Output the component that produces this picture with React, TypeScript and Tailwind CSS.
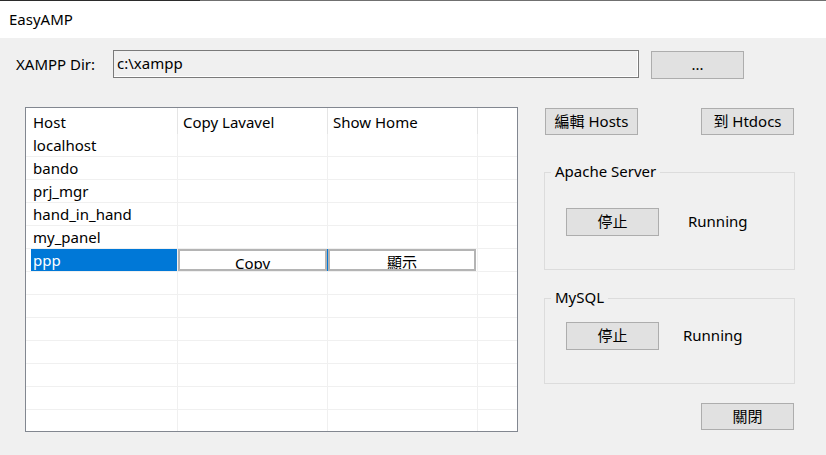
import React from "react";

const font = { fontFamily: '"Noto Sans", "Noto Sans CJK TC", sans-serif' };

function Btn({ children, className = "" }: { children: React.ReactNode; className?: string }) {
  return (
    <div
      className={
        "flex items-center justify-center bg-[#e1e1e1] border border-[#adadad] text-[15px] text-black leading-none pb-[1px] " +
        className
      }
    >
      {children}
    </div>
  );
}

function Group({ label, className = "", children }: { label: string; className?: string; children: React.ReactNode }) {
  return (
    <div className={"relative border border-[#dcdcdc] " + className}>
      <div className="absolute left-[6px] top-[-12px] bg-[#f0f0f0] px-[4px] text-[15px] leading-[20px] text-black">
        {label}
      </div>
      {children}
    </div>
  );
}

const hosts = ["localhost", "bando", "prj_mgr", "hand_in_hand", "my_panel"];

export default function App() {
  const emptyRows = Array.from({ length: 7 });
  return (
    <div className="w-[826px] h-[455px] flex flex-col overflow-hidden bg-[#f0f0f0]" style={font}>
      <div className="flex h-[1px]">
        <div className="w-[200px] bg-[#2b2b2b]" />
        <div className="flex-1 bg-[#707070]" />
      </div>
      <div className="h-[37px] bg-white flex items-center pl-[9px] text-[15px] text-black">EasyAMP</div>
      <div className="flex-1 flex flex-col pl-[16px]">
        <div className="flex mt-[12px] h-[28px]">
          <div className="w-[97px] h-[28px] flex items-center text-[15px] text-black">XAMPP Dir:</div>
          <div className="w-[526px] h-[28px] border border-[#7a7a7a] bg-[#f0f0f0]">
            <div className="h-full border-r border-b border-white flex items-center pl-[3px] pb-[1px] text-[15px] text-black">
              c:\xampp
            </div>
          </div>
          <Btn className="ml-[12px] mt-[1px] w-[93px] h-[28px]">...</Btn>
        </div>
        <div className="flex mt-[29px] pl-[9px]">
          {/* table */}
          <div className="w-[493px] h-[325px] border border-[#828790] bg-white overflow-hidden text-[15px] text-black">
            <div className="flex h-[26px]">
              <div className="w-[5px]" />
              <div className="w-[147px] border-r border-[#e5e5e5] flex items-center pl-[2px] pt-[3px]">Host</div>
              <div className="w-[150px] border-r border-[#e5e5e5] flex items-center pl-[5px] pt-[3px]">Copy Lavavel</div>
              <div className="w-[150px] border-r border-[#e5e5e5] flex items-center pl-[5px] pt-[3px]">Show Home</div>
              <div className="flex-1" />
            </div>
            {hosts.map((h) => (
              <div key={h} className="flex h-[23px] border-b border-[#f0f0f0] pl-[1px]">
                <div className="w-[4px]" />
                <div className="w-[147px] border-r border-[#f0f0f0] flex items-center pl-[2px]">{h}</div>
                <div className="w-[150px] border-r border-[#f0f0f0]" />
                <div className="w-[150px] border-r border-[#f0f0f0]" />
                <div className="flex-1" />
              </div>
            ))}
            <div className="flex h-[23px] border-b border-[#f0f0f0] pl-[1px]">
              <div className="w-[4px]" />
              <div className="w-[146px] bg-[#0078d7] text-white flex items-center pl-[2px]">ppp</div>
              <div className="w-[1px] bg-[#f0f0f0]" />
              <div className="w-[150px] border-r border-[#0078d7] flex items-stretch">
                <div className="flex-1 border-2 border-[#b4b4b4] bg-white flex justify-center overflow-hidden pt-[2px] leading-[20px]">
                  Copy
                </div>
              </div>
              <div className="w-[150px] border-r border-[#f0f0f0] flex items-stretch pr-[1px]">
                <div className="flex-1 border-2 border-[#b4b4b4] bg-white flex justify-center overflow-hidden pt-[1px] leading-[20px]">
                  顯示
                </div>
              </div>
              <div className="flex-1" />
            </div>
            {emptyRows.map((_, i) => (
              <div key={i} className="flex h-[23px] border-b border-[#f0f0f0] pl-[1px]">
                <div className="w-[4px]" />
                <div className="w-[147px] border-r border-[#f0f0f0]" />
                <div className="w-[150px] border-r border-[#f0f0f0]" />
                <div className="w-[150px] border-r border-[#f0f0f0]" />
                <div className="flex-1" />
              </div>
            ))}
          </div>
          {/* right column */}
          <div className="ml-[26px] w-[251px] flex flex-col">
            <div className="flex justify-between px-[1px] mt-[1px]">
              <Btn className="w-[93px] h-[27px]">編輯 Hosts</Btn>
              <Btn className="w-[93px] h-[27px]">到 Htdocs</Btn>
            </div>
            <Group label="Apache Server" className="mt-[37px] h-[98px]">
              <div className="flex items-center pt-[35px] pl-[21px]">
                <Btn className="w-[93px] h-[28px]">停止</Btn>
                <div className="ml-[29px] text-[15px] text-black pb-[2px]">Running</div>
              </div>
            </Group>
            <Group label="MySQL" className="mt-[28px] h-[86px]">
              <div className="flex items-center pt-[23px] pl-[21px]">
                <Btn className="w-[93px] h-[28px]">停止</Btn>
                <div className="ml-[24px] text-[15px] text-black pb-[2px]">Running</div>
              </div>
            </Group>
            <div className="flex justify-end pr-[1px] mt-[19px]">
              <Btn className="w-[93px] h-[27px]">關閉</Btn>
            </div>
          </div>
        </div>
      </div>
    </div>
  );
}
